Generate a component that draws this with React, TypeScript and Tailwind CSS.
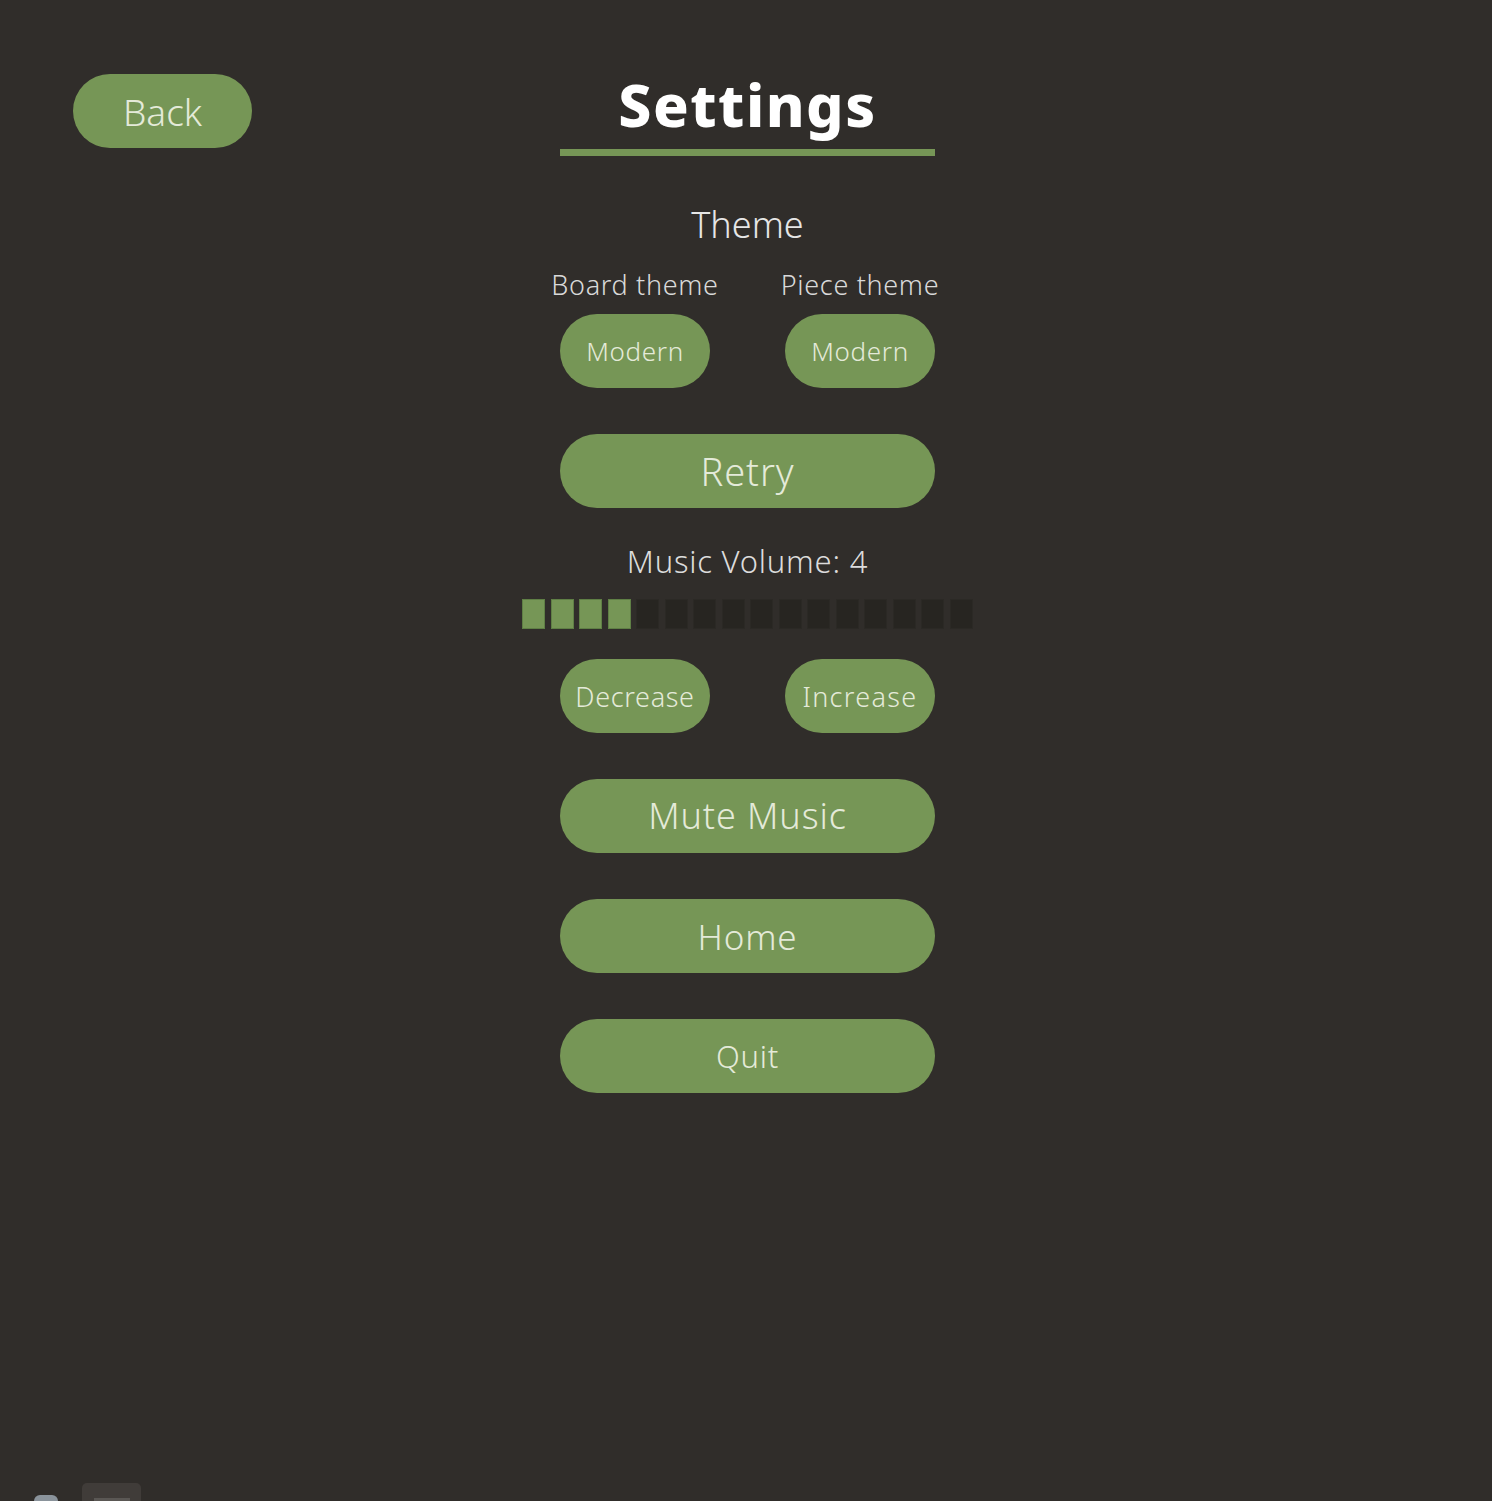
import React, { useState } from 'react'

const font = { fontFamily: '"Noto Sans", "Open Sans", sans-serif' }

function PillButton({ label, className = '' }: { label: string; className?: string }) {
  return (
    <button
      className={`h-[74px] rounded-full bg-[#769656] font-light text-[#e4ead9] leading-none ${className}`}
      style={font}
    >
      {label}
    </button>
  )
}

export default function App() {
  const [volume, setVolume] = useState(4)
  const bars = Array.from({ length: 16 }, (_, i) => i < volume)

  return (
    <div className="relative min-h-[1501px] w-full overflow-hidden bg-[#302d2a]" style={font}>
      <div className="grid grid-cols-[560px_375px_1fr] pt-[74px]">
        <div className="pl-[73px]">
          <PillButton label="Back" className="w-[179px] text-[37px]" />
        </div>
        <div className="flex flex-col items-center">
          <h1 className="w-full border-b-[7px] border-[#769656] pb-[15px] text-center text-[59px] font-extrabold leading-[60px] tracking-wide text-white">
            Settings
          </h1>

          <div className="mt-[49px] text-[36px] font-light leading-[40px] text-[#e6e6e6]">Theme</div>

          <div className="mt-[24px] grid w-full grid-cols-[150px_150px] justify-between">
            <div className="flex flex-col items-center">
              <span className="whitespace-nowrap text-[27px] font-light leading-[32px] tracking-wide text-[#d9d9d9]">
                Board theme
              </span>
              <PillButton label="Modern" className="mt-[13px] w-[150px] text-[26px] tracking-wide" />
            </div>
            <div className="flex flex-col items-center">
              <span className="whitespace-nowrap text-[27px] font-light leading-[32px] tracking-wide text-[#d9d9d9]">
                Piece theme
              </span>
              <PillButton label="Modern" className="mt-[13px] w-[150px] text-[26px] tracking-wide" />
            </div>
          </div>

          <PillButton label="Retry" className="mt-[46px] w-full text-[38px] tracking-wide" />

          <div className="mt-[35px] whitespace-nowrap text-[31px] font-light leading-[36px] tracking-wide text-[#dcdcdc]">
            Music Volume: {volume}
          </div>

          <div className="mt-[20px] flex w-[450px] justify-center gap-[5.5px]">
            {bars.map((on, i) => (
              <div
                key={i}
                className={`h-[30px] w-[23px] shrink-0 border ${
                  on ? 'border-[#5f7f45] bg-[#769656]' : 'border-[#2b2925] bg-[#272521]'
                }`}
              />
            ))}
          </div>

          <div className="mt-[30px] grid w-full grid-cols-[150px_150px] justify-between">
            <div onClick={() => setVolume((v) => Math.max(0, v - 1))}>
              <PillButton label="Decrease" className="w-[150px] text-[27px] tracking-wide" />
            </div>
            <div onClick={() => setVolume((v) => Math.min(16, v + 1))}>
              <PillButton label="Increase" className="w-[150px] text-[27px] tracking-wider" />
            </div>
          </div>

          <PillButton label="Mute Music" className="mt-[46px] w-full text-[36px] tracking-wide" />
          <PillButton label="Home" className="mt-[46px] w-full text-[35px] tracking-wide" />
          <PillButton label="Quit" className="mt-[46px] w-full text-[31px] tracking-wide" />
        </div>
        <div />
      </div>

      {/* stray overlay bits at the bottom edge */}
      <div className="absolute bottom-0 left-[82px] h-[18px] w-[59px] rounded-t-[5px] bg-[#403c39]">
        <div className="absolute bottom-0 left-[12px] h-[3px] w-[36px] bg-[#5a5754]" />
      </div>
      <div className="absolute bottom-0 left-[34px] h-[6px] w-[24px] rounded-t-full bg-[#8a939b]" />
    </div>
  )
}
